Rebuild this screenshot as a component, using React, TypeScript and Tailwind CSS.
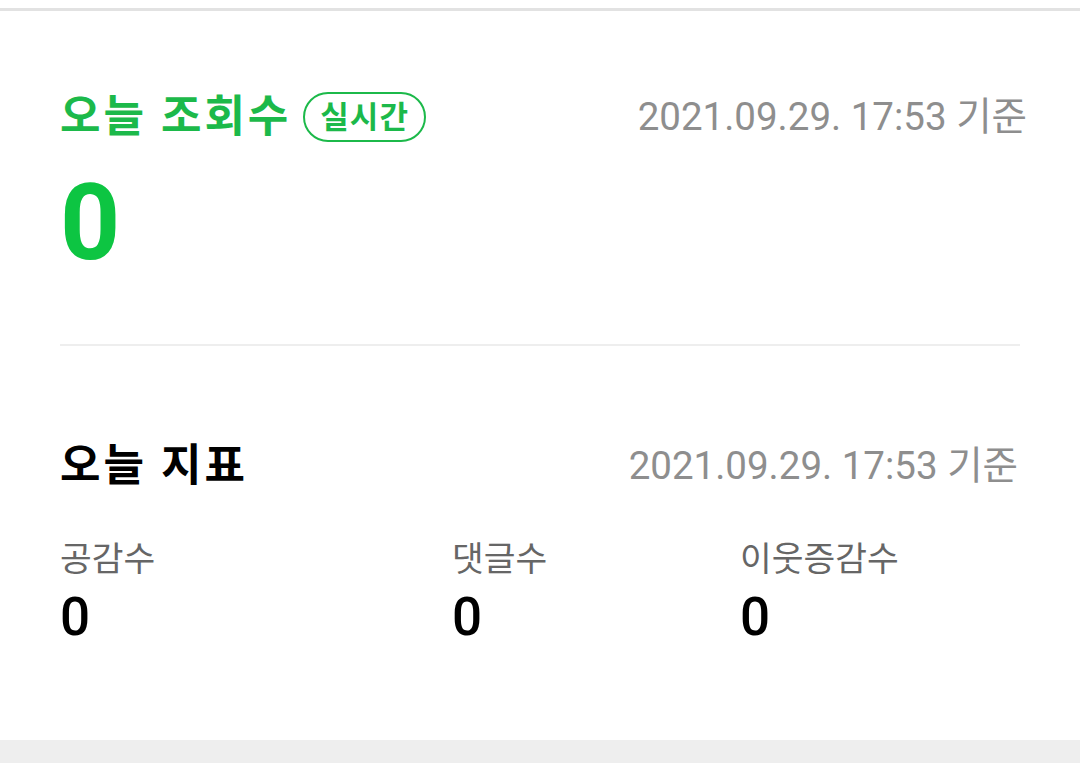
import React from "react";

const KR = "font-['Roboto','Noto_Sans_CJK_KR',sans-serif]";

export default function App() {
  return (
    <div className={`w-[1080px] h-[763px] bg-white flex flex-col ${KR}`}>
      <div className="h-[8px]" />
      <div className="h-[3px] bg-[#e2e2e2]" />
      <div className="flex flex-col flex-1">
        {/* 오늘 조회수 */}
        <div className="pl-[60px] pr-[53px] pt-[79px]">
          <div className="flex items-center justify-between h-[54px]">
            <div className="flex items-center">
              <span className="text-[44px] font-bold text-[#1cb94a] leading-none tracking-[3px]">
                오늘 조회수
              </span>
              <span className="ml-[12px] h-[50px] px-[15px] rounded-full border-[2.5px] border-[#1cb94a] flex items-center text-[#1cb94a] text-[31px] font-bold leading-none tracking-[1px]">
                실시간
              </span>
            </div>
            <span className="text-[38.5px] text-[#8e8e8e] leading-none">
              2021.09.29. 17:53 기준
            </span>
          </div>
          <div className="mt-[27px] text-[105px] font-bold text-[#0dc542] leading-none">0</div>
        </div>
        <div className="mx-[60px] mt-[68px] h-[2px] bg-[#eeeeee]" />
        {/* 오늘 지표 */}
        <div className="pl-[60px] pr-[62px] pt-[96px]">
          <div className="flex items-center justify-between h-[48px]">
            <span className="text-[44px] font-bold text-black leading-none tracking-[3px]">오늘 지표</span>
            <span className="text-[38.5px] text-[#8e8e8e] leading-none">
              2021.09.29. 17:53 기준
            </span>
          </div>
          <div className="mt-[52px] flex">
            <div className="w-[392px] flex flex-col">
              <span className="text-[34.5px] text-[#666666] leading-none">공감수</span>
              <span className="mt-[14px] text-[53px] font-medium text-black leading-none">0</span>
            </div>
            <div className="w-[288px] flex flex-col">
              <span className="text-[34.5px] text-[#666666] leading-none">댓글수</span>
              <span className="mt-[14px] text-[53px] font-medium text-black leading-none">0</span>
            </div>
            <div className="flex flex-col">
              <span className="text-[34.5px] text-[#666666] leading-none">이웃증감수</span>
              <span className="mt-[14px] text-[53px] font-medium text-black leading-none">0</span>
            </div>
          </div>
        </div>
        <div className="flex-1" />
      </div>
      <div className="h-[23px] bg-[#eeeeee]" />
    </div>
  );
}
